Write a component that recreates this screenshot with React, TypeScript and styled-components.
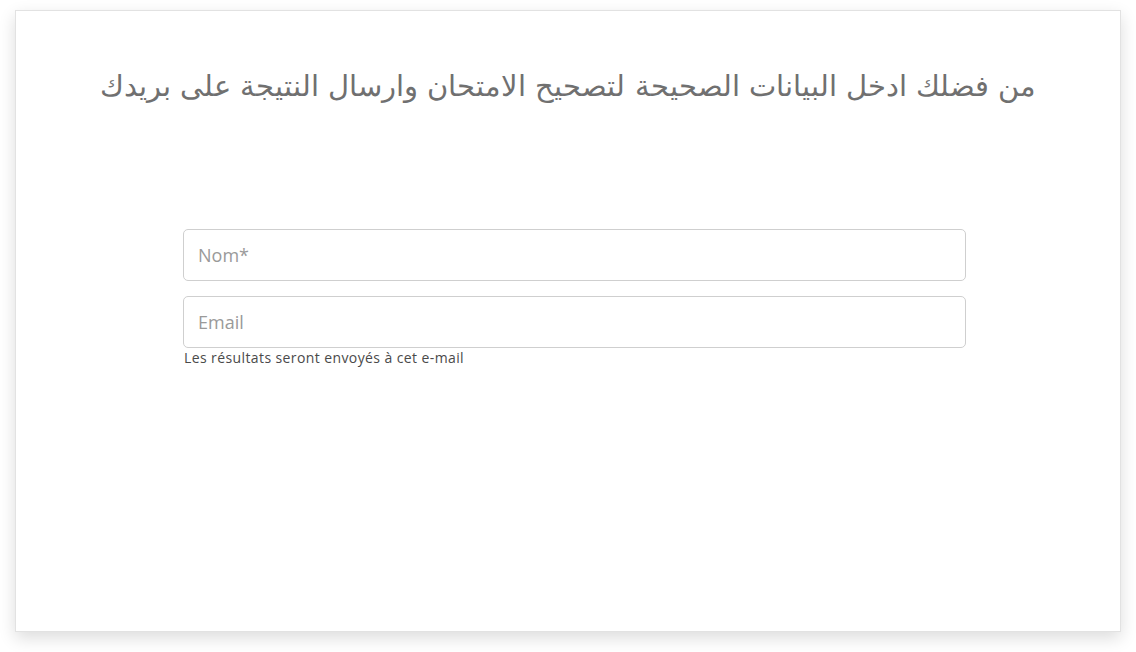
import React from "react";
import styled, { createGlobalStyle } from "styled-components";

const Global = createGlobalStyle`
  html, body { margin: 0; padding: 0; background: #ffffff; }
  body { font-family: "Open Sans", "Liberation Sans", sans-serif; }
  * { box-sizing: border-box; }
`;

const Page = styled.div`
  padding: 10px 16px 0 15px;
  width: 1136px;
  height: 652px;
`;

const Card = styled.div`
  width: 1106px;
  height: 622px;
  background: #fff;
  border: 1px solid #e2e2e2;
  box-shadow: 0 6px 16px rgba(0, 0, 0, 0.14);
  display: flex;
  flex-direction: column;
  align-items: stretch;
`;

const Title = styled.h1`
  margin: 56px 0 0;
  text-align: center;
  direction: rtl;
  font-family: "DejaVu Sans", "Noto Sans", sans-serif;
  font-weight: 200;
  font-size: 28.8px;
  line-height: 38px;
  color: #707070;
`;

const Form = styled.form`
  margin: 124px 0 0 167px;
  width: 783px;
  display: flex;
  flex-direction: column;
  gap: 15px;
`;

const Field = styled.div`
  display: flex;
  flex-direction: column;
`;

const Input = styled.input`
  width: 100%;
  height: 52px;
  border: 1px solid #cfcfcf;
  border-radius: 5px;
  padding: 0 14px;
  font-family: "Open Sans", sans-serif;
  font-size: 18px;
  color: #555;
  outline: none;
  &::placeholder { color: #9a9a9a; }
`;

const Help = styled.small`
  margin-top: 1px;
  font-family: "Open Sans", sans-serif;
  font-size: 14px;
  letter-spacing: 0.4px;
  line-height: 18px;
  color: #4a4a4a;
  padding-left: 1px;
`;

export default function App() {
  return (
    <Page>
      <Global />
      <Card>
        <Title>من فضلك ادخل البيانات الصحيحة لتصحيح الامتحان وارسال النتيجة على بريدك</Title>
        <Form>
          <Field>
            <Input placeholder="Nom*" />
          </Field>
          <Field>
            <Input placeholder="Email" />
            <Help>Les résultats seront envoyés à cet e-mail</Help>
          </Field>
        </Form>
      </Card>
    </Page>
  );
}
